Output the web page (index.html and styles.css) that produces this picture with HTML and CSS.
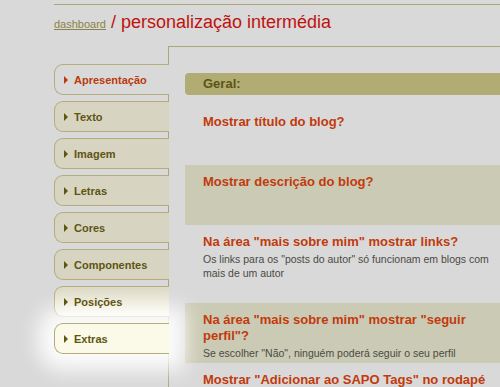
FILE: index.html
```html
<!DOCTYPE html>
<html lang="pt">
<head>
<meta charset="utf-8">
<title>personalização intermédia</title>
<link rel="stylesheet" href="styles.css">
</head>
<body>
<div class="page">
  <div class="top-rule"></div>
  <div class="breadcrumb"><a class="crumb" href="#">dashboard</a><span class="current"> / personalização intermédia</span></div>
  <div class="main">
    <ul class="tabs">
      <li class="tab active"><span class="arrow"></span>Apresentação</li>
      <li class="tab"><span class="arrow"></span>Texto</li>
      <li class="tab"><span class="arrow"></span>Imagem</li>
      <li class="tab"><span class="arrow"></span>Letras</li>
      <li class="tab"><span class="arrow"></span>Cores</li>
      <li class="tab"><span class="arrow"></span>Componentes</li>
      <li class="tab near"><span class="arrow"></span>Posições</li>
      <li class="tab hover"><span class="arrow"></span>Extras</li>
    </ul>
    <div class="panel">
      <div class="section-head">Geral:</div>
      <div class="item h60">
        <div class="q">Mostrar título do blog?</div>
      </div>
      <div class="item alt h60">
        <div class="q">Mostrar descrição do blog?</div>
      </div>
      <div class="item h78">
        <div class="q">Na área "mais sobre mim" mostrar links?</div>
        <div class="desc">Os links para os "posts do autor" só funcionam em blogs com mais de um autor</div>
      </div>
      <div class="item alt h60">
        <div class="q">Na área "mais sobre mim" mostrar "seguir perfil"?</div>
        <div class="desc">Se escolher "Não", ninguém poderá seguir o seu perfil</div>
      </div>
      <div class="item h60">
        <div class="q">Mostrar "Adicionar ao SAPO Tags" no rodapé</div>
      </div>
    </div>
  </div>
</div>
</body>
</html>
```
FILE: styles.css
```css
html, body {
  margin: 0;
  padding: 0;
  background: #d9d9d9;
  font-family: "Liberation Sans", Arial, sans-serif;
  overflow: hidden;
}
.page {
  padding-left: 54px;
  padding-top: 4px;
  width: 700px;
}
.top-rule {
  height: 1px;
  background: #aca77a;
}
.breadcrumb {
  margin-top: 7px;
  height: 20px;
  line-height: 20px;
  white-space: nowrap;
}
.crumb {
  font-size: 11px;
  color: #8a8346;
  text-decoration: underline;
}
.current {
  font-size: 18px;
  color: #c0120e;
}
.main {
  display: flex;
  margin-top: 14px;
}
.tabs {
  list-style: none;
  margin: 18px 0 0 0;
  padding: 0;
  width: 115px;
  flex: none;
  position: relative;
  z-index: 1;
  margin-right: -1px;
}
.tab {
  height: 29px;
  margin-bottom: 6px;
  border: 1px solid #b3ad7b;
  border-right: none;
  border-radius: 9px 0 0 9px;
  background: #d7d4c1;
  display: flex;
  align-items: center;
  padding-left: 9px;
  font-size: 11px;
  font-weight: bold;
  color: #5e5512;
}
.tab.active {
  background: #d9d9d9;
  color: #b83c0c;
}
.tab.near {
  background: linear-gradient(#dcd9c6, #f5f3e2);
}
.tab.hover {
  background: #fbf9e7;
  box-shadow: 0 0 20px 16px rgba(255, 255, 255, 0.9);
}
.arrow {
  width: 0;
  height: 0;
  border-top: 4px solid transparent;
  border-bottom: 4px solid transparent;
  border-left: 4px solid #5e5512;
  margin-right: 6px;
}
.tab.active .arrow {
  border-left-color: #b83c0c;
}
.panel {
  flex: 1;
  border-left: 1px solid #aca77a;
  border-top: 1px solid #aca77a;
  padding: 26px 0 0 16px;
  min-height: 400px;
}
.section-head {
  height: 22px;
  line-height: 22px;
  background: #b1ac73;
  border-radius: 4px 0 0 4px;
  padding-left: 18px;
  font-size: 13px;
  font-weight: bold;
  color: #5b5413;
  margin-bottom: 10px;
}
.item {
  box-sizing: border-box;
  padding: 9px 0 0 18px;
}
.item.alt {
  background: #cbcab4;
}
.h60 { height: 60px; }
.h78 { height: 78px; }
.q {
  width: 296px;
  font-size: 13px;
  font-weight: bold;
  line-height: 16px;
  color: #c23a0c;
}
.desc {
  width: 292px;
  font-size: 10.5px;
  line-height: 14px;
  color: #4a4a44;
  margin-top: 2px;
}
```
